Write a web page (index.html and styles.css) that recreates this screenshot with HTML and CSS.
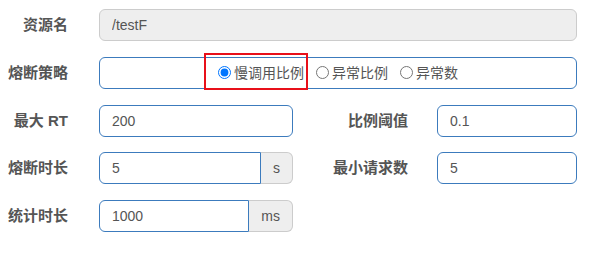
FILE: index.html
```html
<!DOCTYPE html>
<html lang="zh">
<head>
<meta charset="utf-8">
<title>熔断规则</title>
<link rel="stylesheet" href="styles.css">
</head>
<body>
<form class="form">
  <div class="row">
    <label class="lbl">资源名</label>
    <input class="inp wide disabled" type="text" value="/testF" disabled>
  </div>
  <div class="row">
    <label class="lbl">熔断策略</label>
    <div class="inp wide radios">
      <label class="opt hl"><input type="radio" name="grade" checked><span>慢调用比例</span></label>
      <label class="opt"><input type="radio" name="grade"><span>异常比例</span></label>
      <label class="opt"><input type="radio" name="grade"><span>异常数</span></label>
    </div>
  </div>
  <div class="row">
    <label class="lbl">最大 RT</label>
    <input class="inp half" type="text" value="200">
    <label class="lbl lbl2">比例阈值</label>
    <input class="inp right" type="text" value="0.1">
  </div>
  <div class="row">
    <label class="lbl">熔断时长</label>
    <div class="group half">
      <input class="inp grow" type="text" value="5">
      <span class="addon">s</span>
    </div>
    <label class="lbl lbl2">最小请求数</label>
    <input class="inp right" type="text" value="5">
  </div>
  <div class="row">
    <label class="lbl">统计时长</label>
    <div class="group half">
      <input class="inp grow" type="text" value="1000">
      <span class="addon">ms</span>
    </div>
  </div>
</form>
</body>
</html>
```
FILE: styles.css
```css
body {
  margin: 0;
  background: #fff;
  color: #555;
  font-family: "Liberation Sans", "Noto Sans CJK SC", sans-serif;
}

.form {
  display: flex;
  flex-direction: column;
  gap: 15.75px;
  padding-top: 9px;
}

.row {
  display: flex;
  align-items: center;
  height: 32px;
}

.lbl {
  width: 68px;
  flex: none;
  text-align: right;
  font-weight: bold;
  font-size: 15px;
  color: #555;
  margin-right: 31px;
  line-height: 20px;
}

.lbl2 {
  width: 115px;
  margin-right: 29px;
}

.inp {
  box-sizing: border-box;
  height: 32px;
  margin: 0;
  border: 1px solid #3c7bbd;
  border-radius: 6px;
  padding: 6px 12px;
  font: 14px "Liberation Sans", "Noto Sans CJK SC", sans-serif;
  color: #555;
  background: #fff;
  outline: none;
}

.wide {
  width: 478px;
}

.half {
  width: 194px;
}

.right {
  width: 140px;
}

.disabled {
  background: #eee;
  border-color: #ccc;
  color: #555;
  -webkit-text-fill-color: #555;
  opacity: 1;
}

.radios {
  display: flex;
  align-items: center;
  justify-content: center;
  gap: 12px;
  padding: 0;
}

.opt {
  position: relative;
  display: flex;
  align-items: center;
  font-size: 14px;
  line-height: 20px;
  color: #555;
}

.opt input {
  width: 13px;
  height: 13px;
  margin: 0 3px 0 0;
}

.hl::after {
  content: "";
  position: absolute;
  left: -14px;
  right: -4px;
  top: -10px;
  bottom: -7px;
  border: 2px solid #e8101a;
  pointer-events: none;
}

.group {
  display: flex;
  height: 32px;
}

.grow {
  flex: 1;
  min-width: 0;
  border-radius: 6px 0 0 6px;
}

.addon {
  display: flex;
  align-items: center;
  box-sizing: border-box;
  padding: 0 12px;
  background: #eee;
  border: 1px solid #ccc;
  border-left: 0;
  border-radius: 0 6px 6px 0;
  font-size: 14px;
  color: #555;
}
```
